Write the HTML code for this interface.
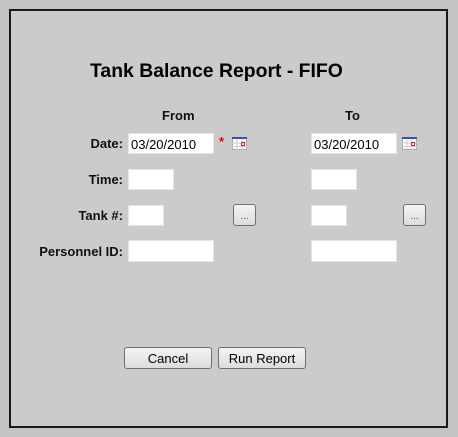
<!DOCTYPE html>
<html><head><style>
body{margin:0;width:458px;height:437px;background:#c4c4c4;font-family:"Liberation Sans",sans-serif;position:relative;overflow:hidden}
.frame{position:absolute;left:9px;top:9px;width:435px;height:415px;border:2px solid #1a1a1a;background:#cbcbcb}
.a{position:absolute}
.t{font-size:19.4px;font-weight:bold;color:#000}
.l{font-size:13px;font-weight:bold;text-align:right;color:#111}
.in{position:absolute;background:#fff;border:1px solid #e4e4e4;box-sizing:border-box;font-size:13px;padding:3px 0 0 2px;color:#000}
.btn{position:absolute;box-sizing:border-box;border:1px solid #707070;border-radius:3px;background:linear-gradient(#f4f4f4,#dcdcdc);font-size:13px;text-align:center;color:#000}
.cal{position:absolute;width:15px;height:13px}
</style></head><body>
<div class="frame"></div>
<div class="a t" style="left:90px;top:60px">Tank Balance Report - FIFO</div>
<div class="a l" style="left:162px;top:108px">From</div>
<div class="a l" style="left:345px;top:108px">To</div>
<div class="a l" style="left:0;width:123px;top:136px">Date:</div>
<div class="a l" style="left:0;width:123px;top:172px">Time:</div>
<div class="a l" style="left:0;width:123px;top:208px">Tank #:</div>
<div class="a l" style="left:0;width:123px;top:244px">Personnel ID:</div>
<div class="in" style="left:128px;top:133px;width:86px;height:21px">03/20/2010</div>
<div class="in" style="left:311px;top:133px;width:86px;height:21px">03/20/2010</div>
<div class="a" style="left:219px;top:134px;color:#e00;font-size:13px;font-weight:bold">*</div>
<svg class="cal" style="left:232px;top:137px" viewBox="0 0 15 13"><rect x="0.5" y="0.5" width="14" height="12" fill="#fff" stroke="#aaa"/><rect x="0" y="0" width="15" height="2" fill="#3a4fb0"/><path d="M5 2v11M10 2v11M0 6h15M0 9.5h15" stroke="#ccc"/><rect x="9.5" y="5.5" width="3" height="3" fill="none" stroke="#b03030"/></svg>
<svg class="cal" style="left:402px;top:137px" viewBox="0 0 15 13"><rect x="0.5" y="0.5" width="14" height="12" fill="#fff" stroke="#aaa"/><rect x="0" y="0" width="15" height="2" fill="#3a4fb0"/><path d="M5 2v11M10 2v11M0 6h15M0 9.5h15" stroke="#ccc"/><rect x="9.5" y="5.5" width="3" height="3" fill="none" stroke="#b03030"/></svg>
<div class="in" style="left:128px;top:169px;width:46px;height:21px"></div>
<div class="in" style="left:311px;top:169px;width:46px;height:21px"></div>
<div class="in" style="left:128px;top:205px;width:36px;height:21px"></div>
<div class="in" style="left:311px;top:205px;width:36px;height:21px"></div>
<div class="btn" style="left:233px;top:204px;width:23px;height:22px;font-size:10px;padding-top:6px;color:#555">...</div>
<div class="btn" style="left:403px;top:204px;width:23px;height:22px;font-size:10px;padding-top:6px;color:#555">...</div>
<div class="in" style="left:128px;top:240px;width:86px;height:22px"></div>
<div class="in" style="left:311px;top:240px;width:86px;height:22px"></div>
<div class="btn" style="left:124px;top:347px;width:88px;height:22px;padding-top:3px">Cancel</div>
<div class="btn" style="left:218px;top:347px;width:88px;height:22px;padding-top:3px">Run Report</div>
</body></html>
